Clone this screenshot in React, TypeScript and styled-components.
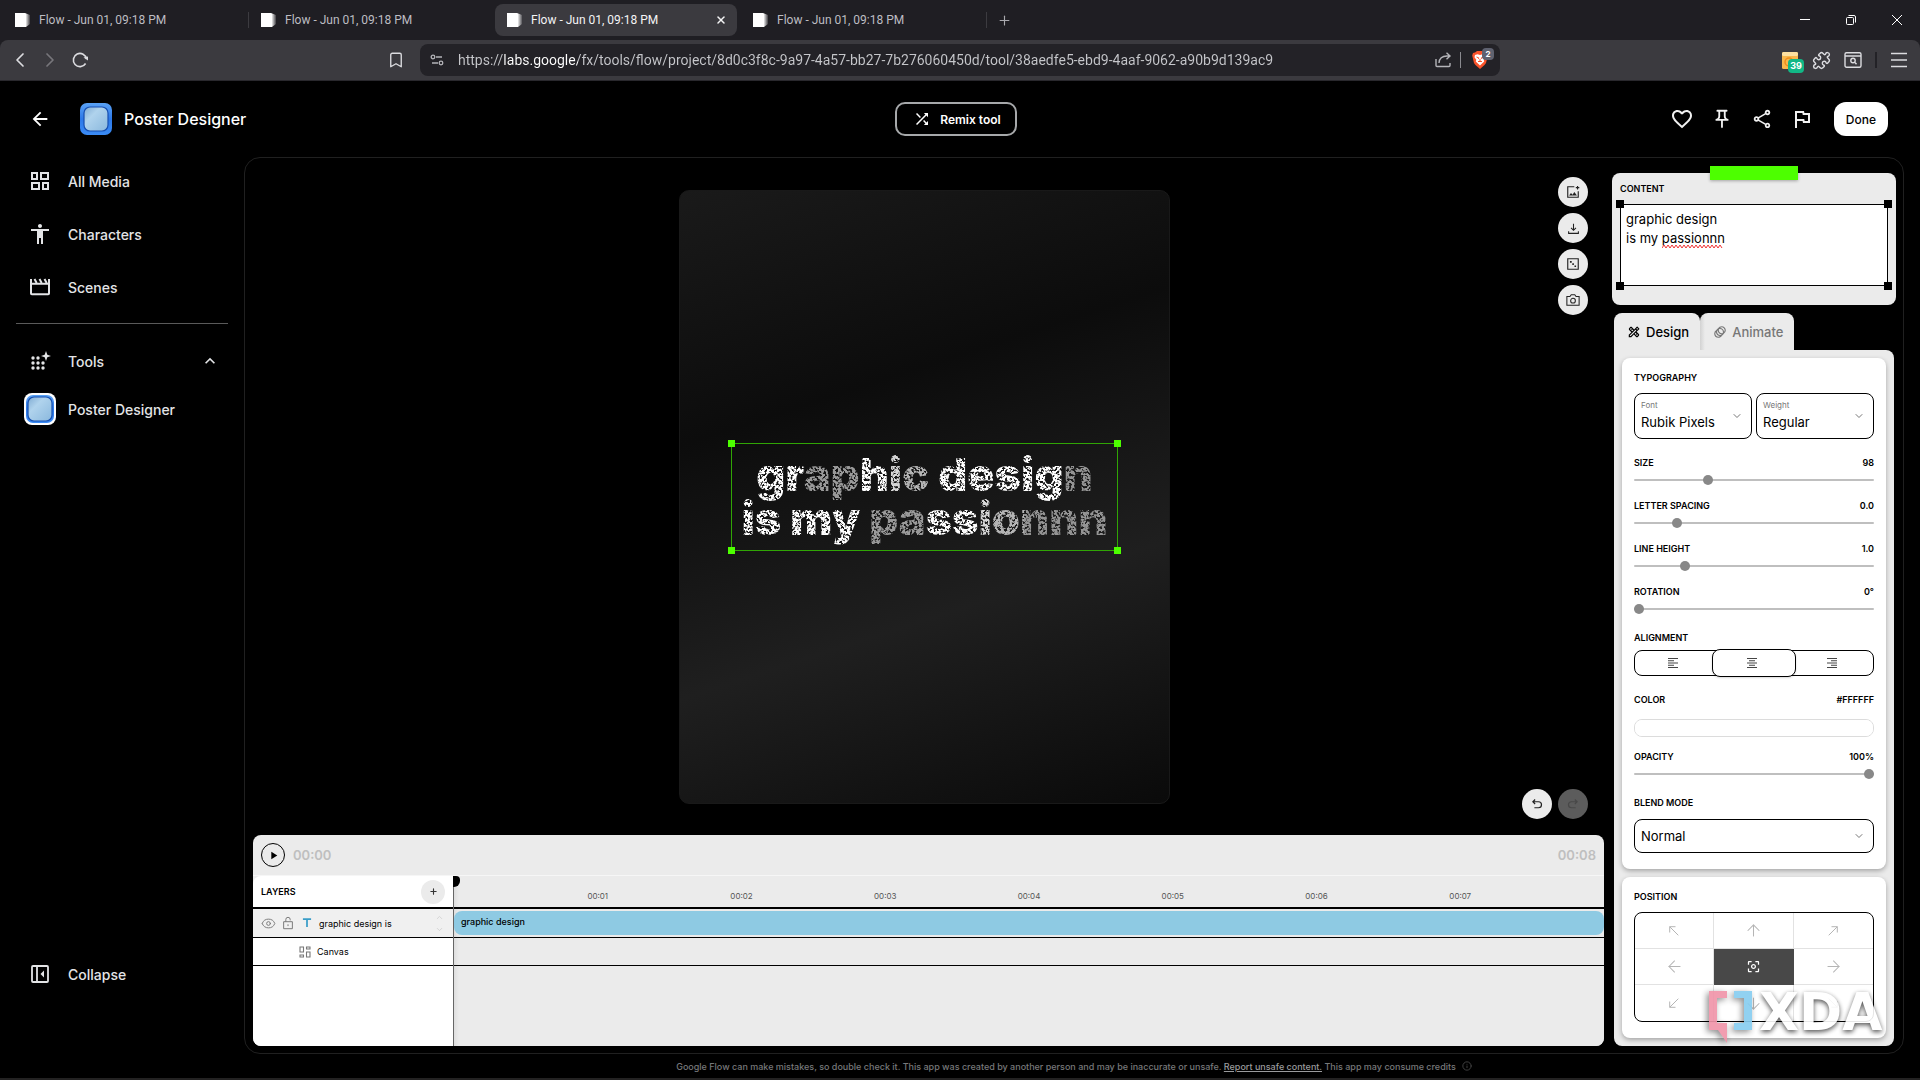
import React, { useState } from "react";
import styled, { createGlobalStyle, css } from "styled-components";
import {
  ArrowDown, ArrowLeft, ArrowRight, ArrowUp, Bookmark, ChevronDown, ChevronLeft, ChevronRight, ChevronUp, Eye, Info,
  Plus, Puzzle, X,
} from "lucide-react";
import {
  MdAccessibility, MdArrowBack, MdCenterFocusWeak, MdKeyboardArrowUp, MdOutlineAnimation, MdOutlineDesignServices,
  MdOutlineFavoriteBorder, MdOutlineFlag, MdOutlinePushPin, MdOutlineShare, MdPlayArrow, MdShuffle, MdTitle,
} from "react-icons/md";

const ui = `Inter, "Open Sans", sans-serif`;
const chrome = `Roboto, "Open Sans", sans-serif`;
const lime = "#4dff00";

const GlobalStyle = createGlobalStyle`
  *, *::before, *::after { box-sizing: border-box; }
  body { margin: 0; background: #000; font-family: ${ui}; color: #fff; }
  button, input, select, textarea { font-family: inherit; color: inherit; margin: 0; }
  button { border: 0; background: none; padding: 0; cursor: pointer; display: inline-flex; align-items: center; justify-content: center; }
  svg { display: block; flex: none; }
`;

const Shell = styled.div`
  height: 100vh;
  min-height: 1080px;
  display: flex;
  flex-direction: column;
`;

/* ---------- browser chrome ---------- */

const TabStrip = styled.div`
  height: 48px;
  margin-bottom: -8px;
  padding: 4px 0 12px 3px;
  display: flex;
  background: #1f1e23;
  font-family: ${chrome};
`;
const TabSlot = styled.div<{ $line: boolean }>`
  width: 246px;
  padding-right: 4px;
  display: flex;
  background: linear-gradient(#3c3b40, #3c3b40) no-repeat right 0 center / ${(p) => (p.$line ? "1px 16px" : "0 0")};
`;
const BrowserTab = styled.button<{ $active: boolean }>`
  flex: 1;
  padding: 0 10px 0 12px;
  border-radius: 8px;
  gap: 8px;
  font-size: 12px;
  color: ${(p) => (p.$active ? "#f4f4f5" : "#bdbdc2")};
  background: ${(p) => (p.$active ? "#3b3a3f" : "transparent")};
  span { flex: 1; text-align: left; }
`;
const NewTab = styled.button`
  width: 30px;
  margin-left: 2px;
  color: #a9a9ae;
`;
const WindowControls = styled.div`
  margin-left: auto;
  display: flex;
  button { width: 46px; }
`;
const Toolbar = styled.div`
  height: 41px;
  display: flex;
  align-items: center;
  padding: 0 12px 0 8px;
  border-radius: 8px 8px 0 0;
  border-bottom: 1px solid #29282d;
  background: #3b3a3f;
  color: #dcdce0;
  font-family: ${chrome};
`;
const NavGroup = styled.div`
  flex: 1 1 400px;
  max-width: 400px;
  display: flex;
  gap: 6px;
  button { width: 24px; height: 28px; }
  button:last-child { margin-left: auto; }
`;
const AddressBar = styled.div`
  flex: 0 1 1080px;
  min-width: 0;
  height: 32px;
  margin-left: 12px;
  padding: 0 9px 0 10px;
  display: flex;
  align-items: center;
  border-radius: 8px;
  background: #232227;
  color: #b4b4b9;
`;
const AddressInput = styled.input`
  flex: 1;
  min-width: 0;
  height: 32px;
  margin-left: 14px;
  padding: 0;
  border: 0;
  outline: 0;
  font-size: 14px;
  color: transparent;
  background: linear-gradient(90deg, #c6c7cb 46px, #fff 46px 120px, #c6c7cb 120px);
  background-clip: text;
  -webkit-background-clip: text;
`;
const AddressDivider = styled.span`
  width: 1px;
  height: 16px;
  margin-left: 8px;
  background: #8a8a8f;
`;
const ToolbarDivider = styled.span`
  width: 2px;
  height: 16px;
  background: #232227;
`;
const ShieldButton = styled.button`
  position: relative;
  width: 22px;
  height: 24px;
  margin-left: 8px;
`;
const ShieldCount = styled.span`
  position: absolute;
  top: 0;
  right: -3px;
  width: 12px;
  height: 12px;
  border-radius: 4px;
  background: #5f6270;
  color: #fff;
  font: 700 8px/12px ${ui};
`;
const Extensions = styled.div`
  margin-left: auto;
  display: flex;
  align-items: center;
  gap: 13px;
`;
const NotesButton = styled.button`
  position: relative;
  width: 18px;
  height: 20px;
`;
const NotesCount = styled.span`
  position: absolute;
  top: 9px;
  left: 7px;
  width: 16px;
  height: 14px;
  border-radius: 4px;
  background: #12b886;
  color: #fff;
  font: 700 9px/14px ${ui};
`;

/* ---------- app frame ---------- */

const Header = styled.header`
  flex: none;
  height: 76px;
  padding: 0 32px 0 24px;
  display: grid;
  grid-template-columns: 1fr auto 1fr;
  align-items: center;
`;
const Brand = styled.div`
  padding-left: 4px;
  display: flex;
  align-items: center;
  gap: 12px;
  button { width: 24px; height: 24px; margin-right: 16px; }
`;
const Title = styled.h1`
  margin: 0;
  font-size: 16px;
  line-height: 24px;
  font-weight: 500;
`;
const RemixButton = styled.button`
  height: 34px;
  padding: 0 14px 0 16px;
  gap: 9px;
  border: 2px solid #a6a8aa;
  border-radius: 10px;
  font-size: 12px;
  font-weight: 600;
`;
const HeaderActions = styled.div`
  justify-self: end;
  display: flex;
  align-items: center;
  gap: 16px;
`;
const IconButton = styled.button`
  width: 24px;
  height: 24px;
  color: #f1f1f1;
`;
const DoneButton = styled.button`
  height: 34px;
  margin-left: 4px;
  padding: 0 12px;
  border-radius: 12px;
  background: #fff;
  color: #000;
  font-size: 12px;
  font-weight: 500;
`;
const Body = styled.div`
  flex: 1;
  min-height: 0;
  display: grid;
  grid-template-columns: 244px 1fr;
  grid-template-rows: 1fr 24px;
  padding-right: 16px;
  border-bottom: 2px solid #232222;
`;
const Sidebar = styled.nav`
  grid-row: 1 / 3;
  padding: 0 16px 80px;
  display: flex;
  flex-direction: column;
  gap: 5px;
`;
const SideItem = styled.button`
  width: 100%;
  height: 48px;
  padding: 0 8px;
  gap: 12px;
  color: #e3e4e6;
  font-size: 14px;
  font-weight: 500;
  i { width: 32px; display: flex; justify-content: center; }
  span { flex: 1; text-align: left; }
`;
const SideGroup = styled.div`
  margin-top: 7px;
  padding-top: 13px;
  border-top: 1px solid #5a5a5a;
`;
const Spring = styled.div`
  flex: 1;
`;
const Frame = styled.main`
  min-width: 0;
  display: grid;
  grid-template-columns: minmax(0, 1fr) 284px;
  column-gap: 8px;
  padding: 0 7px 7px 0;
  border: 1px solid #202020;
  border-radius: 16px;
`;
const Workspace = styled.div`
  min-width: 0;
  min-height: 0;
  display: flex;
  flex-direction: column;
`;
const Stage = styled.section`
  flex: 1;
  min-height: 0;
  position: relative;
  display: flex;
  align-items: center;
  justify-content: center;
`;
const Poster = styled.div`
  height: calc(100% - 63px);
  aspect-ratio: 4 / 5;
  display: flex;
  align-items: center;
  justify-content: center;
  border: 1px solid #191919;
  border-radius: 10px;
  background: linear-gradient(162deg, #1a1a1a, #0c0c0c 33%, #1f1f1f 66%, #0a0a0a);
`;
const Selection = styled.div`
  position: relative;
  padding: 9px;
  border: 1px solid #30a505;
  font: 900 45px/44px ${ui};
`;
const PosterText = styled.p`
  margin: 0;
  display: flex;
  flex-direction: column;
  align-items: center;
  filter: url(#pixel-grain);
`;
const PosterRow = styled.span<{ $tones: string }>`
  display: block;
  height: 44px;
  white-space: nowrap;
  color: transparent;
  background: linear-gradient(90deg, ${(p) => p.$tones});
  padding-bottom: 6px;
  margin-bottom: -6px;
  box-sizing: content-box;
  background-clip: text;
  -webkit-background-clip: text;
`;
const Handle = styled.b<{ $x: "left" | "right"; $y: "top" | "bottom"; $size: number; $c: string }>`
  position: absolute;
  ${(p) => p.$x}: ${(p) => (p.$size > 7 ? -5 : -4)}px;
  ${(p) => p.$y}: ${(p) => (p.$size > 7 ? -5 : -4)}px;
  width: ${(p) => p.$size}px;
  height: ${(p) => p.$size}px;
  background: ${(p) => p.$c};
`;
const ToolStack = styled.div<{ $bottom?: boolean }>`
  position: absolute;
  right: 16px;
  ${(p) => (p.$bottom ? "bottom: 16px; flex-direction: row;" : "top: 19px; flex-direction: column;")}
  display: flex;
  gap: 6px;
`;
const RoundButton = styled.button`
  width: 30px;
  height: 30px;
  border-radius: 50%;
  background: #ebebeb;
  color: #222;
  &:disabled { background: #5c5c5c; color: #484848; }
`;

/* ---------- timeline ---------- */

const Timeline = styled.section`
  height: 211px;
  margin-left: 8px;
  display: flex;
  flex-direction: column;
  overflow: hidden;
  border-radius: 8px;
  background: #ebebeb;
  color: #000;
`;
const Transport = styled.div`
  height: 41px;
  padding: 0 8px;
  display: flex;
  align-items: center;
  gap: 8px;
  border-bottom: 1px solid #f6f6f6;
`;
const PlayButton = styled.button`
  width: 24px;
  height: 24px;
  border: 1px solid #000;
  border-radius: 50%;
`;
const Clock = styled.time`
  font-size: 13px;
  font-weight: 600;
  color: #bfbfbf;
  &:last-child { margin-left: auto; }
`;
const Tracks = styled.div`
  flex: 1;
  display: grid;
  grid-template-columns: 201px 1fr;
`;
const LayerColumn = styled.div`
  border-right: 1px solid #666;
  border-radius: 8px 0 0 0;
  background: #fff;
`;
const LayerHead = styled.div`
  height: 33px;
  padding: 0 8px;
  display: flex;
  align-items: center;
  justify-content: space-between;
  border-bottom: 2px solid #000;
`;
const AddLayer = styled.button`
  width: 24px;
  height: 24px;
  border-radius: 50%;
  background: #ebebeb;
  color: #333;
`;
const rowLine = css<{ $tall?: boolean }>`
  height: ${(p) => (p.$tall ? 29 : 28)}px;
  border-bottom: 1px solid #000;
`;
const LayerRow = styled.div<{ $tall?: boolean }>`
  ${rowLine}
  padding: 0 8px 0 ${(p) => (p.$tall ? 8 : 46)}px;
  display: flex;
  align-items: center;
  gap: ${(p) => (p.$tall ? 5 : 6)}px;
  background: ${(p) => (p.$tall ? "#f0f0f0" : "#fff")};
  color: #777;
  font-size: 9px;
  span { color: #000; }
`;
const Reorder = styled.div`
  margin-left: auto;
  display: grid;
  gap: 2px;
  color: #ccc;
  button { width: 12px; height: 10px; }
`;
const Lanes = styled.div`
  min-width: 0;
  background: linear-gradient(90deg, #dedede, #ebebeb 5px);
`;
const Ruler = styled.div`
  position: relative;
  height: 33px;
  display: grid;
  grid-template-columns: repeat(8, 1fr);
  align-items: center;
  padding-top: 8px;
  border-bottom: 2px solid #000;
  font-size: 8px;
  color: #555;
`;
const Tick = styled.span`
  text-align: center;
  transform: translateX(50%);
`;
const Playhead = styled.i`
  position: absolute;
  left: -1px;
  top: 0;
  width: 7px;
  height: 11px;
  border-radius: 0 4px 6px 0;
  background: #000;
`;
const Lane = styled.div<{ $tall?: boolean }>`
  ${rowLine}
  padding: 2px 0;
`;
const Clip = styled.div`
  height: 24px;
  padding: 0 7px;
  border-radius: 8px;
  background: #8ecae3;
  font-size: 9px;
  line-height: 22px;
  font-weight: 500;
`;

/* ---------- inspector ---------- */

const Inspector = styled.aside`
  padding-top: 15px;
  display: flex;
  flex-direction: column;
  color: #000;
`;
const ContentCard = styled.section`
  position: relative;
  height: 132px;
  padding: 9px 8px 8px;
  border-radius: 8px;
  background: #ebebeb;
`;
const Tape = styled.i`
  position: absolute;
  top: -7px;
  left: calc(50% - 44px);
  width: 88px;
  height: 14px;
  background: ${lime};
  box-shadow: 0 1px 3px rgba(0, 0, 0, 0.3);
`;
const Caption = styled.label`
  display: block;
  font-size: 9px;
  line-height: 14px;
  font-weight: 600;
`;
const Heading = styled.h2`
  margin: 0;
  font-size: 9px;
  line-height: 14px;
  font-weight: 600;
`;
const EditorBox = styled.div`
  position: relative;
  margin-top: 8px;
  height: 82px;
  border: 1px solid #000;
  background: #fff;
`;
const Editor = styled.textarea`
  display: block;
  width: 100%;
  height: 100%;
  padding: 5px;
  border: 0;
  outline: 0;
  resize: none;
  overflow: hidden;
  background: transparent;
  font-size: 13px;
  line-height: 19px;
`;
const Squiggle = styled.svg`
  position: absolute;
  left: 41px;
  top: 39px;
  pointer-events: none;
`;
const Tabs = styled.div`
  margin: 8px 2px 0;
  display: flex;
`;
const PanelTab = styled.button<{ $active: boolean }>`
  height: 37px;
  padding: 0 11px 0 13px;
  gap: 5px;
  border-radius: 8px 8px 0 0;
  background: ${(p) => (p.$active ? "#ebebeb" : "linear-gradient(90deg, #d2d2d2, #ebebeb 5px)")};
  color: ${(p) => (p.$active ? "#000" : "#777")};
  font-size: 13px;
  font-weight: 500;
`;
const Panel = styled.div`
  position: relative;
  flex: 1;
  margin: 0 2px;
  padding: 8px;
  display: flex;
  flex-direction: column;
  gap: 8px;
  border-radius: 0 8px 8px 8px;
  background: #ebebeb;
`;
const Card = styled.section`
  padding: 13px 12px 16px;
  display: flex;
  flex-direction: column;
  gap: 17px;
  border-radius: 8px;
  background: #fff;
  box-shadow: 0 2px 5px rgba(0, 0, 0, 0.3);
`;
const Group = styled.div<{ $gap: number }>`
  display: grid;
  gap: ${(p) => p.$gap}px;
`;
const Pair = styled.div`
  display: grid;
  grid-template-columns: 1fr 1fr;
  gap: 4px;
`;
const SelectField = styled.div<{ $tall?: boolean }>`
  height: ${(p) => (p.$tall ? 46 : 34)}px;
  padding: 0 8px 0 6px;
  display: grid;
  grid-template-columns: 1fr 12px;
  grid-template-rows: ${(p) => (p.$tall ? "12px 22px" : "22px")};
  align-content: center;
  align-items: center;
  border: 1px solid #000;
  border-radius: 8px;
  svg { grid-area: 1 / 2 / -1 / 3; pointer-events: none; color: #777; }
`;
const TinyLabel = styled.label`
  font-size: 8px;
  line-height: 12px;
  color: #777;
`;
const Select = styled.select<{ $row: number }>`
  grid-area: ${(p) => p.$row} / 1 / ${(p) => p.$row + 1} / 3;
  width: 100%;
  height: 22px;
  padding: 0;
  appearance: none;
  border: 0;
  outline: 0;
  background: transparent;
  font-size: 13px;
`;
const Line = styled.div`
  display: flex;
  justify-content: space-between;
  output { font-size: 9px; line-height: 14px; font-weight: 600; }
`;
const Range = styled.input`
  display: block;
  width: 100%;
  height: 10px;
  appearance: none;
  background: transparent;
  &::-webkit-slider-runnable-track { height: 2px; border-radius: 1px; background: #bfbfbf; }
  &::-webkit-slider-thumb { appearance: none; width: 10px; height: 10px; margin-top: -4px; border-radius: 50%; background: #888; }
`;
const Segments = styled.div`
  height: 26px;
  display: grid;
  grid-template-columns: 79px 1fr 79px;
  border: 1px solid #000;
  border-radius: 8px;
`;
const Segment = styled.button<{ $active: boolean }>`
  padding-right: 4px;
  color: #444;
  ${(p) => p.$active && css`
    margin: -2px;
    border: 1px solid #000;
    border-radius: 8px;
    background: #fff;
    box-shadow: 0 1px 2px rgba(0, 0, 0, 0.15);
  `}
`;
const Swatch = styled.input`
  display: block;
  width: 100%;
  height: 18px;
  margin-top: 7px;
  padding: 0;
  border: 1px solid #dcdcdc;
  border-radius: 8px;
  background: #fff;
  overflow: hidden;
  &::-webkit-color-swatch-wrapper { padding: 0; }
  &::-webkit-color-swatch { border: 0; }
`;
const Anchors = styled.div`
  display: grid;
  grid-template-columns: repeat(3, 1fr);
  grid-template-rows: repeat(3, 36px);
  overflow: hidden;
  border: 1px solid #000;
  border-radius: 8px;
`;
const Anchor = styled.button<{ $i: number; $active: boolean }>`
  border: solid #e2e2e2;
  border-width: 0 ${(p) => (p.$i % 3 < 2 ? 1 : 0)}px ${(p) => (p.$i < 6 ? 1 : 0)}px 0;
  color: #b5b5b5;
  ${(p) => p.$active && "background: #484848; border-color: #484848; color: #fff;"}
`;
const Watermark = styled.div`
  position: absolute;
  right: 0;
  bottom: 2px;
  width: 190px;
  padding: 0 0 0 5px;
  display: flex;
  align-items: flex-start;
  gap: 6px;
  pointer-events: none;
  opacity: 0.9;
  color: #fff;
  font: 700 52px/64px "DejaVu Sans", sans-serif;
  text-shadow: 0 2px 5px rgba(0, 0, 0, 0.75);
  svg { margin-top: 11px; filter: drop-shadow(-2px 2px 3px rgba(0, 0, 0, 0.5)); overflow: visible; }
`;
const Footer = styled.footer`
  display: flex;
  align-items: center;
  justify-content: center;
  gap: 6px;
  color: #77787a;
  font-size: 9px;
  font-weight: 500;
  a { color: #9a9b9d; }
`;

/* ---------- drawings ---------- */

const FlowMark = () => (
  <svg width="16" height="16" viewBox="0 0 16 16">
    <defs><linearGradient id="flow-fade"><stop offset=".7" stopColor="#fff" /><stop offset="1" stopColor="#fff" stopOpacity=".15" /></linearGradient></defs>
    <path d="M0 1h10l5 2v9l-4 3H0z" fill="url(#flow-fade)" />
  </svg>
);
const AppTile = ({ framed }: { framed?: boolean }) => (
  <svg width="32" height="32" viewBox="0 0 32 32">
    <defs>
      <linearGradient id="tile-rim" x1="0" y1="0" x2="0" y2="1"><stop stopColor="#5aa2f5" /><stop offset=".5" stopColor="#2c78e8" /><stop offset="1" stopColor="#3b8cf6" /></linearGradient>
      <linearGradient id="tile-face" x1="0" y1="0" x2="1" y2="1"><stop stopColor="#7fabd2" /><stop offset=".35" stopColor="#b0d3ed" /><stop offset="1" stopColor="#8ab8dd" /></linearGradient>
    </defs>
    {framed && <rect width="32" height="32" rx="8" fill="#fff" />}
    <rect x={framed ? 2 : 0} y={framed ? 2 : 0} width={framed ? 28 : 32} height={framed ? 28 : 32} rx="7" fill="url(#tile-rim)" />
    <rect x="4" y="4" width="24" height="24" rx="6" fill="url(#tile-face)" stroke="#174fb0" strokeWidth="1.2" />
  </svg>
);
const Stroke = ({ size = 16, box = 16, w = 1.2, children }: { size?: number; box?: number; w?: number; children: React.ReactNode }) => (
  <svg width={size} height={size} viewBox={`0 0 ${box} ${box}`} fill="none" stroke="currentColor" strokeWidth={w}>{children}</svg>
);
const MediaIcon = () => <Stroke size={20} box={20} w={2}><path d="M2 2h5v6H2zM11 2h7v6h-7zM2 12h7v6H2zM13 12h5v6h-5z" /></Stroke>;
const SceneIcon = () => (
  <Stroke size={22} box={22} w={2}><path d="M2 6v11.500q0 .8.8.8h16.400q.8 0 .8-.8V6M1.500 7.800h19" /><path d="M2 3v4M5.500 3l2.200 4M10.500 3l2.200 4M15.500 3l2.200 4M20 3v4" /></Stroke>
);
const ToolsIcon = () => (
  <svg width="22" height="22" viewBox="0 0 22 22" fill="currentColor">
    {[[4, 8], [9, 8], [4, 13], [9, 13], [14, 13], [4, 18], [9, 18], [14, 18]].map(([x, y]) => <circle key={`${x}-${y}`} cx={x} cy={y} r="1.700" />)}
    <path d="M17 1l1.300 3.700L22 6l-3.700 1.300L17 11l-1.300-3.700L12 6l3.700-1.300z" />
  </svg>
);
const CollapseIcon = () => (
  <Stroke size={20} box={20} w={1.8}><rect x="2" y="2" width="16" height="16" rx="1" /><path d="M7 2v16" /><path d="M14 6.500v7L10.500 10z" fill="currentColor" stroke="none" /></Stroke>
);
const ReloadIcon = () => (
  <Stroke size={18} box={18} w={1.6}><path d="M14.600 12.500A6.600 6.600 0 1 1 15.500 8" /><path d="M12.500 6.500l4.500-1v4z" fill="currentColor" stroke="none" /></Stroke>
);
const SiteIcon = () => (
  <Stroke size={14} box={14} w={1.3}><circle cx="3" cy="4" r="1.800" /><path d="M6 4h6M2 10h6" /><circle cx="11" cy="10" r="1.800" /></Stroke>
);
const ShareOut = () => (
  <Stroke size={18} box={18} w={1.4}><path d="M2 8v6.500q0 1 1 1h12q1 0 1-1V12" /><path d="M5 12q.5-7 8-7h2.500M12.500 1.800L16 5l-3.500 3.200" /></Stroke>
);
const Lion = () => (
  <svg width="16" height="18" viewBox="0 0 16 18">
    <path d="M3 1.500L5 0h6l2 1.500 2 .5.800 2.500L14 12l-1.500 2L8 18l-4.500-4L2 12 .2 4.500 1 2z" fill="#fb542b" />
    <path d="M3 4l2.500-.8L8 4l2.500-.8L13 4l.5 2.200-1.800 2.600.5 1.700L8 14.500 3.800 10.500l.5-1.700L2.500 6.200z" fill="#fff" />
    <path d="M4.500 6l2.300.9-.3 1M11.500 6l-2.300.9.3 1M6 10.500h4M8 8v2.500" stroke="#fb542b" fill="none" />
  </svg>
);
const SearchPage = () => (
  <Stroke size={18} box={18} w={1.4}><rect x="1" y="1.700" width="16" height="14.600" rx="1.500" /><path d="M1 5h16M11 11.500l1.500 1.700" /><circle cx="9" cy="9.500" r="2.200" /></Stroke>
);
const NoteTile = () => (
  <svg width="16" height="17" viewBox="0 0 16 17"><rect width="16" height="17" rx="1.500" fill="#f9b84b" /><rect width="16" height="4" rx="1.500" fill="#fde0a0" /><circle cx="7" cy="10" r="4" fill="none" stroke="#f08c1c" strokeWidth="1.500" /></svg>
);
const ImageAdd = () => <Stroke size={14} w={1.3}><path d="M9.500 2H2v12h12V7" /><path d="M3.500 12l2.200-3 1.800 2 2-3 3 4z" fill="currentColor" stroke="none" /><path d="M13.200 1v4M11.200 3h4" /></Stroke>;
const SaveDown = () => <Stroke size={13} w={1.3}><path d="M8 2v8M5 7.200l3 3 3-3M2 11.500V14h12v-2.500" /></Stroke>;
const Dice = () => <Stroke size={14} w={1.3}><path d="M2 2h12v12H2z" /><path d="M4.500 4.500h2v2h-2zM7.200 7.200h1.800v1.800H7.200zM9.700 9.700h1.800v1.800H9.700z" fill="currentColor" stroke="none" /></Stroke>;
const Photo = () => <Stroke size={14} w={1.2}><path d="M1 4h3.500L6 2h4l1.500 2H15v10H1z" /><circle cx="8" cy="8.800" r="2.700" /></Stroke>;
const TurnBack = ({ flip }: { flip?: boolean }) => (
  <Stroke size={12} w={1.6}><g transform={flip ? "matrix(-1 0 0 1 16 0)" : undefined}><path d="M5.500 2L2.500 5l3 3M2.500 5H10a3.800 3.800 0 0 1 0 8H4.500" /></g></Stroke>
);
const Padlock = () => <Stroke size={14} w={1.1}><path d="M3 6.500h10v8H3zM5.500 6.500V4a2.500 2.500 0 0 1 5 0v1M8 9.500v2" /></Stroke>;
const CanvasIcon = () => <Stroke size={12} box={12} w={1.1}><path d="M1 1h3.500v5H1zM7.500 1H11v2H7.500zM1 9h3.500v2H1zM7.500 6H11v5H7.500z" /></Stroke>;
const AlignIcon = ({ mode }: { mode: number }) => (
  <Stroke size={12} box={12} w={1}>
    <path d={[10, 6, 10, 6, 10].map((len, i) => `M${1 + ((10 - len) * mode) / 2} ${1.5 + i * 2.25}h${len}`).join("")} />
  </Stroke>
);
const DiagonalArrow = ({ turn }: { turn: number }) => (
  <Stroke size={10} box={10} w={1}><g transform={`rotate(${turn} 5 5)`}><path d="M.7 6.500V.7h5.800M.7.7l8.600 8.600" /></g></Stroke>
);
const XdaBrackets = () => (
  <svg width="44" height="52" viewBox="0 0 44 52">
    <path d="M0 0h18v7H8v25h10v20L9 39H0z" fill="#f093a8" />
    <path d="M25 0h18v39H25v-7h10V7H25z" fill="#86cdf0" />
  </svg>
);

/* ---------- data ---------- */

const layerText = [
  { text: "graphic design", tones: "#fff 14%, #9a9a9a 14% 31%, #fff 31% 40%, #d6d6d6 40% 44%, #b4b4b4 44% 53%, #fff 53% 91%, #949494 91%" },
  { text: "is my passionnn", tones: "#fff 34%, #9a9a9a 34% 51%, #fff 51% 65%, #d6d6d6 65% 69%, #b4b4b4 69% 77%, #949494 77%" },
];
const sliders = [
  { id: "size", name: "SIZE", shown: "98", at: 30 },
  { id: "spacing", name: "LETTER SPACING", shown: "0.0", at: 16.5 },
  { id: "leading", name: "LINE HEIGHT", shown: "1.0", at: 20 },
  { id: "rotation", name: "ROTATION", shown: "0°", at: 0 },
];
const straight = { size: 19, strokeWidth: 1.3 };
const anchors: [string, React.ReactNode][] = [
  ["Top left", <DiagonalArrow turn={0} />], ["Top", <ArrowUp {...straight} />], ["Top right", <DiagonalArrow turn={90} />],
  ["Left", <ArrowLeft {...straight} />], ["Center", <MdCenterFocusWeak size={15} />], ["Right", <ArrowRight {...straight} />],
  ["Bottom left", <DiagonalArrow turn={270} />], ["Bottom", <ArrowDown {...straight} />], ["Bottom right", <DiagonalArrow turn={180} />],
];

function Corners({ size, color }: { size: number; color: string }) {
  return (
    <>
      {(["left", "right"] as const).map((x) => (["top", "bottom"] as const).map((y) => <Handle key={x + y} $x={x} $y={y} $size={size} $c={color} />))}
    </>
  );
}

function Slider({ id, name, shown, at }: { id: string; name: string; shown: string; at: number }) {
  return (
    <Group $gap={5}>
      <Line><Caption htmlFor={id}>{name}</Caption><output htmlFor={id}>{shown}</output></Line>
      <Range id={id} type="range" min={0} max={100} step={0.5} defaultValue={at} />
    </Group>
  );
}

function Picker({ id, label, value }: { id: string; label: string; value: string }) {
  return (
    <SelectField $tall>
      <TinyLabel htmlFor={id}>{label}</TinyLabel>
      <Select id={id} $row={2} defaultValue={value}><option>{value}</option></Select>
      <ChevronDown size={12} strokeWidth={2} />
    </SelectField>
  );
}

function BrowserChrome() {
  return (
    <>
      <TabStrip>
        {[0, 1, 2, 3].map((i) => (
          <TabSlot key={i} $line={i === 0 || i === 3}>
            <BrowserTab $active={i === 2}><FlowMark /><span>Flow - Jun 01, 09:18 PM</span>{i === 2 && <X size={12} strokeWidth={3} />}</BrowserTab>
          </TabSlot>
        ))}
        <NewTab aria-label="New tab"><Plus size={15} strokeWidth={1.8} /></NewTab>
        <WindowControls>
          <button aria-label="Minimize"><Stroke size={12} box={12} w={1}><path d="M1 5.500h10" /></Stroke></button>
          <button aria-label="Restore"><Stroke size={12} box={12} w={1}><rect x="1.500" y="3.500" width="7" height="7" rx="1" /><path d="M3.500 1.500H9a1.500 1.500 0 0 1 1.500 1.500v5.500" /></Stroke></button>
          <button aria-label="Close"><Stroke size={12} box={12} w={1}><path d="M1 1l10 10M11 1L1 11" /></Stroke></button>
        </WindowControls>
      </TabStrip>
      <Toolbar>
        <NavGroup>
          <button aria-label="Back"><ChevronLeft size={24} strokeWidth={1.7} /></button>
          <button aria-label="Forward" disabled><ChevronRight size={24} strokeWidth={1.7} color="#77767b" /></button>
          <button aria-label="Reload"><ReloadIcon /></button>
          <button aria-label="Bookmark"><Bookmark size={18} strokeWidth={1.8} /></button>
        </NavGroup>
        <AddressBar>
          <SiteIcon />
          <AddressInput aria-label="Address" defaultValue="https://labs.google/fx/tools/flow/project/8d0c3f8c-9a97-4a57-bb27-7b276060450d/tool/38aedfe5-ebd9-4aaf-9062-a90b9d139ac9" />
          <button aria-label="Share page"><ShareOut /></button>
          <AddressDivider />
          <ShieldButton aria-label="Shields"><Lion /><ShieldCount>2</ShieldCount></ShieldButton>
        </AddressBar>
        <Extensions>
          <NotesButton aria-label="Notes"><NoteTile /><NotesCount>39</NotesCount></NotesButton>
          <button aria-label="Extensions"><Puzzle size={19} strokeWidth={1.8} /></button>
          <button aria-label="Search page"><SearchPage /></button>
          <ToolbarDivider />
          <button aria-label="Menu"><Stroke size={18} box={18} w={1.6}><path d="M1 2.500h16M1 9h16M1 15.500h16" /></Stroke></button>
        </Extensions>
      </Toolbar>
    </>
  );
}

function StageArea() {
  return (
    <Stage>
      <svg width="0" height="0" aria-hidden>
        <filter id="pixel-grain" x="0" y="0" width="100%" height="105%" colorInterpolationFilters="sRGB">
          <feTurbulence type="fractalNoise" baseFrequency="0.42" numOctaves="2" seed="7" result="noise" />
          <feColorMatrix in="noise" type="matrix" values="0 0 0 0 0  0 0 0 0 0  0 0 0 0 0  7 0 0 0 -2.600" result="holes" />
          <feComposite in="SourceGraphic" in2="holes" operator="in" />
        </filter>
      </svg>
      <Poster>
        <Selection>
          <PosterText>{layerText.map((row) => <PosterRow key={row.text} $tones={row.tones}>{row.text}</PosterRow>)}</PosterText>
          <Corners size={7} color={lime} />
        </Selection>
      </Poster>
      <ToolStack>
        <RoundButton aria-label="Add image"><ImageAdd /></RoundButton>
        <RoundButton aria-label="Download"><SaveDown /></RoundButton>
        <RoundButton aria-label="Randomize"><Dice /></RoundButton>
        <RoundButton aria-label="Capture"><Photo /></RoundButton>
      </ToolStack>
      <ToolStack $bottom>
        <RoundButton aria-label="Undo"><TurnBack /></RoundButton>
        <RoundButton aria-label="Redo" disabled><TurnBack flip /></RoundButton>
      </ToolStack>
    </Stage>
  );
}

function TimelineArea() {
  return (
    <Timeline>
      <Transport>
        <PlayButton aria-label="Play"><MdPlayArrow size={13} /></PlayButton>
        <Clock>00:00</Clock>
        <Clock>00:08</Clock>
      </Transport>
      <Tracks>
        <LayerColumn>
          <LayerHead><Heading>LAYERS</Heading><AddLayer aria-label="Add layer"><Plus size={9} strokeWidth={3} /></AddLayer></LayerHead>
          <LayerRow $tall>
            <Eye size={15} strokeWidth={1.5} /><Padlock /><MdTitle size={14} color="#3a9dc8" /><span>graphic design is</span>
            <Reorder>
              <button aria-label="Move up"><ChevronUp size={9} /></button>
              <button aria-label="Move down"><ChevronDown size={9} /></button>
            </Reorder>
          </LayerRow>
          <LayerRow><CanvasIcon /><span>Canvas</span></LayerRow>
        </LayerColumn>
        <Lanes>
          <Ruler>
            <Playhead />
            {[1, 2, 3, 4, 5, 6, 7].map((n) => <Tick key={n}>{`00:0${n}`}</Tick>)}
          </Ruler>
          <Lane $tall><Clip>graphic design</Clip></Lane>
          <Lane />
        </Lanes>
      </Tracks>
    </Timeline>
  );
}

function InspectorArea() {
  const [align, setAlign] = useState(1);
  const [anchor, setAnchor] = useState(4);
  return (
    <Inspector>
      <ContentCard>
        <Caption htmlFor="content">CONTENT</Caption>
        <EditorBox>
          <Editor id="content" spellCheck={false} defaultValue={layerText.map((row) => row.text).join("\n")} />
          <Squiggle width="62" height="5" viewBox="0 0 62 5" fill="none" stroke="#f03434">
            <path d={`M0 4${Array.from({ length: 15 }, () => "l2-3l2 3").join("")}`} />
          </Squiggle>
          <Corners size={8} color="#000" />
        </EditorBox>
        <Tape />
      </ContentCard>
      <Tabs role="tablist">
        <PanelTab role="tab" aria-selected $active><MdOutlineDesignServices size={14} />Design</PanelTab>
        <PanelTab role="tab" aria-selected={false} $active={false}><MdOutlineAnimation size={14} />Animate</PanelTab>
      </Tabs>
      <Panel>
        <Card>
          <Group $gap={8}>
            <Heading>TYPOGRAPHY</Heading>
            <Pair><Picker id="font" label="Font" value="Rubik Pixels" /><Picker id="weight" label="Weight" value="Regular" /></Pair>
          </Group>
          <Group $gap={14}>{sliders.map((s) => <Slider key={s.id} {...s} />)}</Group>
          <Group $gap={5}>
            <Heading>ALIGNMENT</Heading>
            <Segments>
              {["Left", "Center", "Right"].map((name, i) => (
                <Segment key={name} $active={align === i} aria-pressed={align === i} aria-label={name} onClick={() => setAlign(i)}><AlignIcon mode={i} /></Segment>
              ))}
            </Segments>
          </Group>
          <Group $gap={13}>
            <Group $gap={5}>
              <Line><Caption htmlFor="color">COLOR</Caption><output htmlFor="color">#FFFFFF</output></Line>
              <Swatch id="color" type="color" defaultValue="#ffffff" />
            </Group>
            <Slider id="opacity" name="OPACITY" shown="100%" at={100} />
          </Group>
          <Group $gap={9}>
            <Caption htmlFor="blend">BLEND MODE</Caption>
            <SelectField>
              <Select id="blend" $row={1} defaultValue="Normal"><option>Normal</option></Select>
              <ChevronDown size={12} strokeWidth={2} />
            </SelectField>
          </Group>
        </Card>
        <Card>
          <Group $gap={8}>
            <Heading>POSITION</Heading>
            <Anchors>
              {anchors.map(([name, icon], i) => (
                <Anchor key={name} $i={i} $active={anchor === i} aria-label={name} onClick={() => setAnchor(i)}>{icon}</Anchor>
              ))}
            </Anchors>
          </Group>
        </Card>
        <Watermark><XdaBrackets /><span>XDA</span></Watermark>
      </Panel>
    </Inspector>
  );
}

export default function App() {
  return (
    <Shell>
      <GlobalStyle />
      <BrowserChrome />
      <Header>
        <Brand><button aria-label="Back to project"><MdArrowBack size={22} /></button><AppTile /><Title>Poster Designer</Title></Brand>
        <RemixButton><MdShuffle size={18} />Remix tool</RemixButton>
        <HeaderActions>
          <IconButton aria-label="Favorite"><MdOutlineFavoriteBorder size={24} /></IconButton>
          <IconButton aria-label="Pin"><MdOutlinePushPin size={22} /></IconButton>
          <IconButton aria-label="Share"><MdOutlineShare size={22} /></IconButton>
          <IconButton aria-label="Report"><MdOutlineFlag size={24} /></IconButton>
          <DoneButton>Done</DoneButton>
        </HeaderActions>
      </Header>
      <Body>
        <Sidebar>
          <SideItem><i><MediaIcon /></i><span>All Media</span></SideItem>
          <SideItem><i><MdAccessibility size={24} /></i><span>Characters</span></SideItem>
          <SideItem><i><SceneIcon /></i><span>Scenes</span></SideItem>
          <SideGroup>
            <SideItem aria-expanded><i><ToolsIcon /></i><span>Tools</span><MdKeyboardArrowUp size={20} /></SideItem>
            <SideItem><i><AppTile framed /></i><span>Poster Designer</span></SideItem>
          </SideGroup>
          <Spring />
          <SideItem><i><CollapseIcon /></i><span>Collapse</span></SideItem>
        </Sidebar>
        <Frame>
          <Workspace><StageArea /><TimelineArea /></Workspace>
          <InspectorArea />
        </Frame>
        <Footer>
          <span>Google Flow can make mistakes, so double check it. This app was created by another person and may be inaccurate or unsafe. <a href="#report">Report unsafe content.</a> This app may consume credits</span>
          <Info size={10} strokeWidth={2} color="#4a4a4a" />
        </Footer>
      </Body>
    </Shell>
  );
}
